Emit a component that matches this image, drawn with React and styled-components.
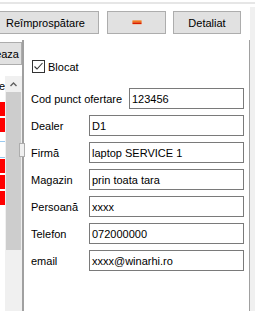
import React from "react";
import styled, { createGlobalStyle } from "styled-components";

const Global = createGlobalStyle`
  html, body { margin: 0; padding: 0; background: #fff; }
  body { font-family: "Liberation Sans", Arial, sans-serif; font-size: 11px; color: #000; overflow: hidden; }
  * { box-sizing: border-box; }
`;

const Page = styled.div`
  width: 255px;
  height: 311px;
  display: flex;
  flex-direction: column;
  overflow: hidden;
`;

const TopRule = styled.div`
  margin-top: 2px;
  height: 2px;
  background: #e6e6e6;
  flex: none;
`;

const Body = styled.div`
  flex: 1;
  display: flex;
  min-height: 0;
`;

const Content = styled.div`
  width: 250px;
  display: flex;
  flex-direction: column;
`;

const RightStrip = styled.div`
  width: 5px;
  margin-top: 3px;
  background: #f0f0f0;
`;

const Toolbar = styled.div`
  display: flex;
  padding-top: 7px;
  height: 30px;
  flex: none;
`;

const Button = styled.div`
  height: 23px;
  width: ${(p) => p.$w}px;
  margin-left: ${(p) => p.$ml}px;
  background: #e1e1e1;
  border: 1px solid #adadad;
  display: flex;
  align-items: center;
  justify-content: ${(p) => p.$justify || "center"};
  padding-right: ${(p) => p.$pr || 0}px;
  white-space: nowrap;
  overflow: hidden;
  flex: none;
`;

const Main = styled.div`
  margin-top: 6px;
  flex: 1;
  display: flex;
  min-height: 0;
`;

const LeftPane = styled.div`
  width: 22px;
  display: flex;
  flex-direction: column;
  overflow: hidden;
  flex: none;
`;

const TabWrap = styled.div`
  margin-top: 2px;
  display: flex;
  justify-content: flex-end;
  width: 22px;
  overflow: hidden;
`;

const List = styled.div`
  margin-top: 11px;
  flex: 1;
  display: flex;
`;

const Cells = styled.div`
  width: 5px;
  display: flex;
  flex-direction: column;
  overflow: hidden;
`;

const HeaderCell = styled.div`
  height: 26px;
  flex: none;
  display: flex;
  align-items: flex-start;
  justify-content: flex-end;
  white-space: nowrap;
  padding-top: 4px;
`;

const Cell = styled.div`
  height: 16px;
  flex: none;
  border-bottom: 2px solid #fff;
  background: #ff0000;
`;

const SelRow = styled.div`
  height: 25px;
  flex: none;
  display: flex;
  flex-direction: column;
  padding-top: 7px;
`;

const SelLine = styled.div`
  height: 17px;
  border-top: 1px solid #99c9ef;
  border-bottom: 1px solid #99c9ef;
`;

const ScrollBar = styled.div`
  width: 17px;
  background: #f0f0f0;
  display: flex;
  flex-direction: column;
  align-items: center;
`;

const ArrowBox = styled.div`
  height: 16px;
  width: 100%;
  display: flex;
  align-items: center;
  justify-content: center;
`;

const Thumb = styled.div`
  width: 15px;
  height: 158px;
  background: #cdcdcd;
`;

const Splitter = styled.div`
  width: 2px;
  background: #a0a0a0;
  flex: none;
  position: relative;
`;

const Grip = styled.div`
  position: absolute;
  left: -3px;
  top: 103px;
  width: 6px;
  height: 14px;
  background: #f0f0f0;
  border: 1px solid #adadad;
`;

const Form = styled.div`
  flex: 1;
  border-right: 1px solid #a0a0a0;
  padding: 20px 5px 0 7px;
  display: flex;
  flex-direction: column;
`;

const CheckRow = styled.label`
  display: flex;
  align-items: center;
  gap: 3px;
  height: 13px;
  margin-left: 1px;
  margin-bottom: 15px;
`;

const Box = styled.span`
  width: 13px;
  height: 13px;
  border: 1px solid #333;
  background: #fff;
  display: flex;
  align-items: center;
  justify-content: center;
`;

const Row = styled.div`
  display: flex;
  align-items: center;
  height: 21px;
  margin-bottom: 6px;
`;

const Label = styled.span`
  width: ${(p) => p.$w}px;
  flex: none;
  white-space: nowrap;
`;

const Field = styled.div`
  flex: 1;
  height: 21px;
  border: 1px solid #7a7a7a;
  padding-left: 2px;
  display: flex;
  align-items: center;
  white-space: nowrap;
  overflow: hidden;
`;

const rows = [
  ["Dealer", "D1"],
  ["Firmă", "laptop SERVICE 1"],
  ["Magazin", "prin toata tara"],
  ["Persoană", "xxxx"],
  ["Telefon", "072000000"],
  ["email", "xxxx@winarhi.ro"],
];

export default function App() {
  return (
    <Page>
      <Global />
      <TopRule />
      <Body>
        <Content>
          <Toolbar>
            <Button $w={107} $ml={-8}>Reîmprospătare</Button>
            <Button $w={59} $ml={8}>
              <svg width="10" height="5" viewBox="0 0 10 5">
                <rect x="0.5" y="0.5" width="9" height="4" fill="#f4b183" />
                <rect x="0.5" y="0.5" width="9" height="2" fill="#f07820" />
                <rect x="0.5" y="2.5" width="9" height="1.5" fill="#d81e00" />
              </svg>
            </Button>
            <Button $w={68} $ml={7}>Detaliat</Button>
          </Toolbar>
          <Main>
            <LeftPane>
              <TabWrap>
                <Button $w={60} $ml={0} $justify="flex-end" $pr={2}>Salveaza</Button>
              </TabWrap>
              <List>
                <Cells>
                  <HeaderCell>e</HeaderCell>
                  <Cell />
                  <Cell />
                  <SelRow>
                    <SelLine />
                  </SelRow>
                  <Cell />
                  <Cell />
                  <Cell />
                </Cells>
                <ScrollBar>
                  <ArrowBox>
                    <svg width="7" height="5" viewBox="0 0 7 5">
                      <path d="M0.5 4 L3.5 1 L6.5 4" fill="none" stroke="#606060" strokeWidth="1.4" />
                    </svg>
                  </ArrowBox>
                  <Thumb />
                </ScrollBar>
              </List>
            </LeftPane>
            <Splitter>
              <Grip />
            </Splitter>
            <Form>
              <CheckRow>
                <Box>
                  <svg width="11" height="11" viewBox="0 0 11 11">
                    <path d="M1.5 5.5 L4 8 L9.5 2" fill="none" stroke="#333" strokeWidth="1.1" />
                  </svg>
                </Box>
                Blocat
              </CheckRow>
              <Row>
                <Label $w={98}>Cod punct ofertare</Label>
                <Field>123456</Field>
              </Row>
              {rows.map(([l, v]) => (
                <Row key={l}>
                  <Label $w={58}>{l}</Label>
                  <Field>{v}</Field>
                </Row>
              ))}
            </Form>
          </Main>
        </Content>
        <RightStrip />
      </Body>
    </Page>
  );
}
